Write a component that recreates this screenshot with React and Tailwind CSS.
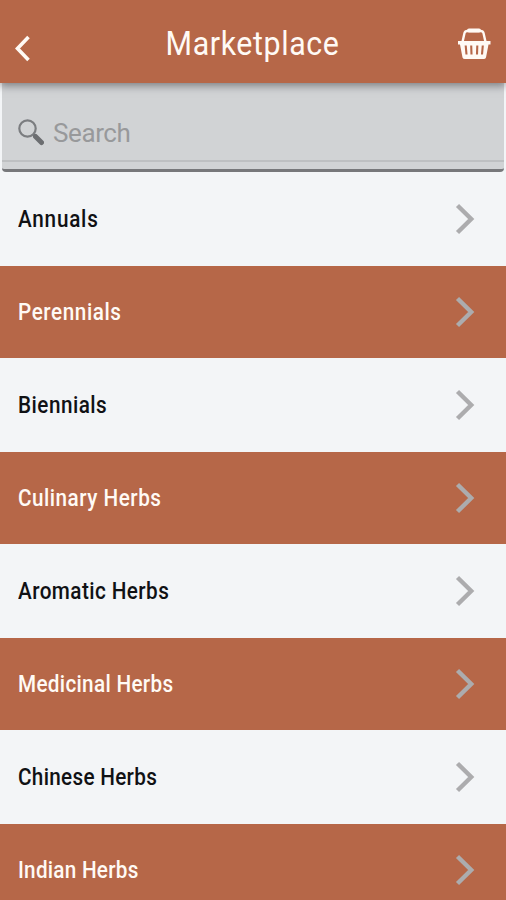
import clsx from 'clsx'

const categories = [
  { name: 'Annuals', tracking: 'tracking-[0.85px]' },
  { name: 'Perennials', tracking: 'tracking-[0.64px]' },
  { name: 'Biennials', tracking: 'tracking-[0.54px]' },
  { name: 'Culinary Herbs', tracking: 'tracking-[0.56px]' },
  { name: 'Aromatic Herbs', tracking: 'tracking-[0.48px]' },
  { name: 'Medicinal Herbs', tracking: 'tracking-[0.35px]' },
  { name: 'Chinese Herbs', tracking: 'tracking-[0.34px]' },
  { name: 'Indian Herbs', tracking: 'tracking-[0.28px]' },
]

const BackIcon = () => (
  <svg className="w-4 h-7" viewBox="0 0 16 28" fill="none" stroke="#fffaf5" strokeWidth="3.6">
    <path d="M14.500 3 3.500 14.500 14.500 26" />
  </svg>
)

const BasketIcon = () => (
  <svg className="w-[34px] h-8" viewBox="0 0 34 32" fill="none" stroke="#fffaf5">
    <path d="M5.500 14 7.500 5Q8 3 10.500 3H23.500Q26 3 26.500 5L28.500 14" strokeWidth="2.4" />
    <path d="M12 2.500H22" strokeWidth="4" strokeLinecap="round" />
    <path d="M1 13H33.500V16.500H31.500L29 29.500Q28.500 31 26.500 31H8Q6 31 5.500 29.500L3 16.500H1Z" fill="#fffaf5" stroke="none" />
    <path d="M8.700 17.500 9.500 26.500M14.200 17.500 14.500 26.500M20.300 17.500 20 26.500M25.800 17.500 25 26.500" stroke="#b66748" strokeWidth="2.100" />
  </svg>
)

const SearchIcon = () => (
  <svg className="w-[26px] h-7" viewBox="0 0 26 28" fill="none">
    <circle cx="9.500" cy="9.500" r="8.200" stroke="#7b7d80" strokeWidth="2.200" />
    <path d="M15.500 15.500 18.500 18.500" stroke="#7b7d80" strokeWidth="2.500" />
    <path d="M17.500 17.500 23.500 23.500" stroke="#6c6e71" strokeWidth="5" strokeLinecap="round" />
  </svg>
)

const ChevronIcon = () => (
  <svg className="w-5 h-8" viewBox="0 0 20 32" fill="none" stroke="#acacae" strokeWidth="4.400">
    <path d="M2.500 2.500 16.200 16 2.500 29.500" />
  </svg>
)

const Header = () => (
  <header className="relative z-10 h-[83px] shrink-0 flex items-center justify-between pl-[14px] pr-[15px] pt-1 bg-[#b66748] shadow-[0_3px_8px_rgba(60,60,65,0.55)]">
    <button className="w-[34px] pt-2" aria-label="Back">
      <BackIcon />
    </button>
    <h1 className="text-[33px] leading-10 tracking-[0.64px] scale-x-92 text-[#fffaf5]">Marketplace</h1>
    <button aria-label="Basket">
      <BasketIcon />
    </button>
  </header>
)

const SearchBar = () => (
  <div className="h-[89px] shrink-0 px-0.5 bg-[#f3f5f7]">
    <label className="h-full flex flex-col rounded-b-[4px] overflow-hidden bg-[#d1d3d5] border-b-[3px] border-[#77787b]">
      <div className="h-[79px] shrink-0 flex items-center gap-[9px] pl-4 pt-[22px] border-b-2 border-[#bec0c2]">
        <SearchIcon />
        <span className="text-[26px] leading-8 tracking-[-0.4px] text-[#98999b]">Search</span>
      </div>
    </label>
  </div>
)

const CategoryRow = ({ name, tracking, highlighted }) => (
  <li
    className={clsx(
      'shrink-0 flex items-center justify-between pl-[18px] pr-[31px]',
      highlighted ? 'h-[92px] bg-[#b66748] text-[#fffaf5]' : 'h-[94px] bg-[#f3f5f7] text-[#101114]',
    )}
  >
    <span className={clsx('pt-0.5 text-[23px] leading-7 font-medium origin-left scale-x-90', tracking)}>{name}</span>
    <ChevronIcon />
  </li>
)

export default function App() {
  return (
    <div className="w-[506px] h-[900px] flex flex-col overflow-hidden bg-[#f3f5f7] font-['Roboto','Liberation_Sans',sans-serif]">
      <Header />
      <SearchBar />
      <ul className="flex flex-col">
        {categories.map((c, i) => (
          <CategoryRow key={c.name} {...c} highlighted={i % 2 === 1} />
        ))}
      </ul>
    </div>
  )
}
